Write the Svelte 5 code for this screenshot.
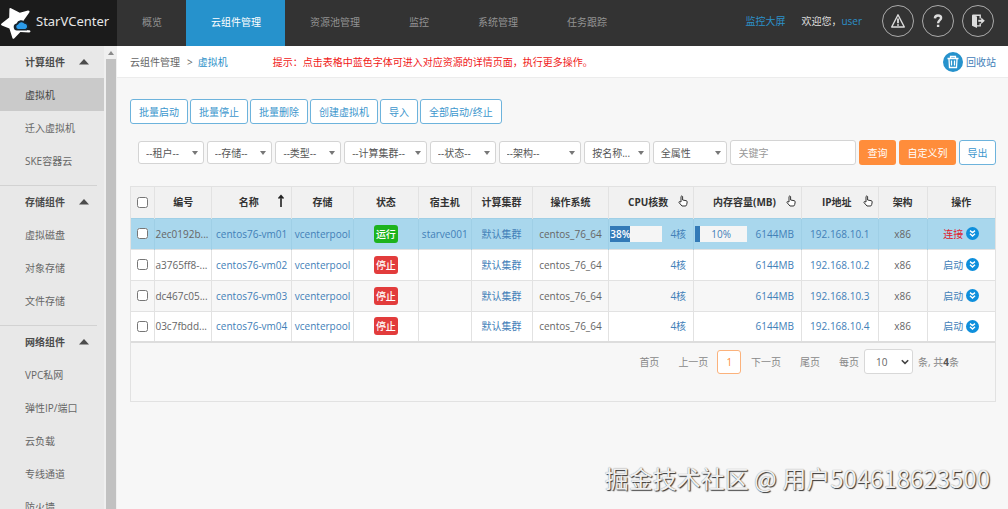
<script lang="ts">
  type Vm = {
    id: string;
    name: string;
    running: boolean;
    host: string;
    cpu: number | null;
    mem: number | null;
    ip: string;
  };

  const tabs = ["概览", "云组件管理", "资源池管理", "监控", "系统管理", "任务跟踪"];

  const groups = [
    { title: "计算组件", items: ["虚拟机", "迁入虚拟机", "SKE容器云"] },
    { title: "存储组件", items: ["虚拟磁盘", "对象存储", "文件存储"] },
    { title: "网络组件", items: ["VPC私网", "弹性IP/端口", "云负载", "专线通道", "防火墙"] },
  ];

  const actions = ["批量启动", "批量停止", "批量删除", "创建虚拟机", "导入", "全部启动/终止"];

  const filters = [
    { label: "租户", text: "--租户--" },
    { label: "存储", text: "--存储--" },
    { label: "类型", text: "--类型--" },
    { label: "计算集群", text: "--计算集群--" },
    { label: "状态", text: "--状态--" },
    { label: "架构", text: "--架构--" },
    { label: "查询方式", text: "按名称..." },
    { label: "属性", text: "全属性" },
  ];

  // width is relative, the columns share the table's width
  const columns = [
    { title: "编号", width: 57 },
    { title: "名称", width: 80, icon: "sort" },
    { title: "存储", width: 62 },
    { title: "状态", width: 65 },
    { title: "宿主机", width: 53 },
    { title: "计算集群", width: 61 },
    { title: "操作系统", width: 77 },
    { title: "CPU核数", width: 85, icon: "hand" },
    { title: "内存容量(MB)", width: 108, icon: "hand" },
    { title: "IP地址", width: 77, icon: "hand" },
    { title: "架构", width: 49 },
    { title: "操作", width: 68 },
  ];
  const checkWidth = 24;
  const totalWidth = checkWidth + columns.reduce((sum, c) => sum + c.width, 0);

  const vms: Vm[] = [
    { id: "2ec0192b...", name: "centos76-vm01", running: true, host: "starve001", cpu: 38, mem: 10, ip: "192.168.10.1" },
    { id: "a3765ff8-...", name: "centos76-vm02", running: false, host: "", cpu: null, mem: null, ip: "192.168.10.2" },
    { id: "dc467c05...", name: "centos76-vm03", running: false, host: "", cpu: null, mem: null, ip: "192.168.10.3" },
    { id: "03c7fbdd...", name: "centos76-vm04", running: false, host: "", cpu: null, mem: null, ip: "192.168.10.4" },
  ];

  let activeTab = $state("云组件管理");
  let activeItem = $state("虚拟机");
  let selected = $state<string[]>([]);
  let allSelected = $derived(selected.length === vms.length);

  function toggleAll() {
    selected = allSelected ? [] : vms.map((vm) => vm.id);
  }
</script>

{#snippet usage(percent: number | null, text: string)}
  <div class="usage">
    {#if percent !== null}
      <div class="bar">
        <div class="bar-fill" style="width: {percent}%"></div>
        <span class="bar-label {percent > 30 ? 'inside' : ''}">{percent}%</span>
      </div>
    {/if}
    <a class="usage-text" href="#usage">{text}</a>
  </div>
{/snippet}

<div class="app">
  <header class="header">
    <a class="brand" href="#home">
      <svg class="logo" viewBox="0 0 32 37" aria-hidden="true">
        <path d="M11 5.3Q9.4 4.5 9.4 6.4L9.2 14.4 1.6 20.6Q.2 21.8 1.8 22.6L9.4 25.6 12.4 35Q13.2 36.6 14.4 35.2L20.4 28.9 29.2 29.4Q30.8 29.3 30.4 28Q30 27 28.8 27.2L26 27 23.6 17.6 29.3 9.4Q30.2 7.4 28 7.5L19.8 9.8Z" fill="#fff" />
        <path d="M17 27.6a3.6 3.6 0 0 1-.5-7.1 5 5 0 0 1 8.7-1.2 4.2 4.2 0 0 1 3 6.7l-1.4 1.6z" fill="#16242e" />
        <path d="M18 26a2.3 2.3 0 0 1 .1-4.5 3.7 3.7 0 0 1 6.4-.7 2.7 2.7 0 0 1 .9 5.2z" fill="#2b9bea" />
      </svg>
      <span>StarVCenter</span>
    </a>
    <nav class="tabs">
      {#each tabs as tab}
        <button class="tab {activeTab === tab ? 'active' : ''}" onclick={() => (activeTab = tab)}>{tab}</button>
      {/each}
    </nav>
    <div class="user">
      <a href="#screen">监控大屏</a>
      <span class="welcome">欢迎您，<a href="#user">user</a></span>
      <div class="round-btns">
        <button class="round-btn" aria-label="告警">
          <svg width="16" height="16" viewBox="0 0 16 16" fill="none" stroke="currentColor" stroke-width="1.4" stroke-linejoin="round"><path d="M8 1.8 14.3 14H1.7z" /><path d="M8 5.6v4.6M8 11.2v1.6" stroke-width="1.8" /></svg>
        </button>
        <button class="round-btn" aria-label="帮助">
          <svg width="16" height="16" viewBox="0 0 16 16" fill="none" stroke="currentColor" stroke-width="2.4"><path d="M4.900 5.400C5 3.400 6.200 2.500 8 2.500c1.900 0 3.100 1 3.100 2.500C11.100 7.200 8.100 7.200 8.100 10.200M8.100 11.700v2.400" /></svg>
        </button>
        <button class="round-btn" aria-label="退出">
          <svg width="16" height="16" viewBox="0 0 16 16" fill="none" stroke="currentColor" stroke-width="1.4"><path d="M2 2l5 1.600v11.400L2 12.800z" fill="currentColor" stroke="none" /><path d="M2.500 2.300h7.700v3.200M10.200 10.200v2.700H6" /><path d="M8.300 7.800h4" stroke-width="2" /><path d="M11.200 4.600 14.800 7.800 11.200 11z" fill="currentColor" stroke="none" /></svg>
        </button>
      </div>
    </div>
  </header>

  <div class="body">
    <aside class="sidebar">
      {#each groups as group}
        <section class="group">
          <button class="group-title">
            {group.title}
            <svg width="10" height="6" viewBox="0 0 10 6" aria-hidden="true"><path d="M5 0l5 5.500H0z" fill="currentColor" /></svg>
          </button>
          {#each group.items as item}
            <button class="menu-item {activeItem === item ? 'active' : ''}" onclick={() => (activeItem = item)}>{item}</button>
          {/each}
        </section>
      {/each}
    </aside>
    <div class="scrollbar">
      <svg width="6" height="4" viewBox="0 0 6 4" aria-hidden="true"><path d="M3 0l3 4H0z" fill="#8a8a8a" /></svg>
      <div class="thumb"></div>
    </div>

    <main class="main">
      <div class="crumbs">
        <span>云组件管理</span>
        <span class="sep">&gt;</span>
        <a class="here" href="#vm">虚拟机</a>
        <p class="tip">提示：点击表格中蓝色字体可进入对应资源的详情页面，执行更多操作。</p>
        <a class="recycle" href="#recycle">
          <svg width="20" height="20" viewBox="0 0 20 20" fill="none" stroke="#fff" aria-hidden="true"><circle cx="10" cy="10" r="10" fill="#2692cc" stroke="none" /><path d="M4.500 6.500h11M7.500 6V4.500h5V6M6 7l.500 8.500h7L14 7M8.500 8.500v5M11.500 8.500v5" stroke-width="1.300" /></svg>
          回收站
        </a>
      </div>

      <div class="content">
        <div class="actions">
          {#each actions as action}
            <button class="btn outline">{action}</button>
          {/each}
        </div>

        <form class="filters" onsubmit={(e) => e.preventDefault()}>
          {#each filters as filter}
            <label class="select">
              <select aria-label={filter.label}>
                <option>{filter.text}</option>
              </select>
            </label>
          {/each}
          <input class="keyword" type="text" placeholder="关键字" aria-label="关键字" />
          <button class="btn orange" type="submit">查询</button>
          <button class="btn orange" type="button">自定义列</button>
          <button class="btn outline" type="button">导出</button>
        </form>

        <div class="panel">
          <table>
            <colgroup>
              <col style="width: {(checkWidth / totalWidth) * 100}%" />
              {#each columns as column}
                <col style="width: {(column.width / totalWidth) * 100}%" />
              {/each}
            </colgroup>
            <thead>
              <tr>
                <th><input type="checkbox" aria-label="全选" checked={allSelected} onchange={toggleAll} /></th>
                {#each columns as column}
                  <th class={column.icon ? "sortable" : ""}>
                    {column.title}
                    {#if column.icon === "sort"}
                      <svg class="th-icon" width="10" height="14" viewBox="0 0 10 14" fill="none" stroke="#222" stroke-width="1.600" aria-hidden="true"><path d="M5 13V2M2.500 4.500 5 1.800l2.500 2.700" /></svg>
                    {:else if column.icon === "hand"}
                      <svg class="th-icon" width="10" height="14" viewBox="0 0 10 14" fill="#fff" stroke="#333" stroke-linejoin="round" aria-hidden="true"><path d="M3 8V2.500q.800-1.200 1.600 0V6l3.600.700q1.100.300 1 1.300l-.500 2.500-.900 1.500H4L1 8.600q-.300-1 .700-1z" /></svg>
                    {/if}
                  </th>
                {/each}
              </tr>
            </thead>
            <tbody>
              {#each vms as vm}
                <tr class={vm.running ? "current" : ""}>
                  <td><input type="checkbox" aria-label={vm.name} value={vm.id} bind:group={selected} /></td>
                  <td class="id">{vm.id}</td>
                  <td><a href="#vm">{vm.name}</a></td>
                  <td><a href="#pool">vcenterpool</a></td>
                  <td><span class="status {vm.running ? 'on' : 'off'}">{vm.running ? "运行" : "停止"}</span></td>
                  <td>{#if vm.host}<a href="#host">{vm.host}</a>{/if}</td>
                  <td><a href="#cluster">默认集群</a></td>
                  <td>centos_76_64</td>
                  <td>{@render usage(vm.cpu, "4核")}</td>
                  <td>{@render usage(vm.mem, "6144MB")}</td>
                  <td><a href="#ip">{vm.ip}</a></td>
                  <td>x86</td>
                  <td>
                    <div class="ops">
                      <a class={vm.running ? "connect" : ""} href="#op">{vm.running ? "连接" : "启动"}</a>
                      <button class="more" aria-label="更多操作">
                        <svg width="13" height="13" viewBox="0 0 13 13" fill="none" stroke="#fff" stroke-width="1.400"><circle cx="6.500" cy="6.500" r="6.500" fill="#0e8fdc" stroke="none" /><path d="M4 3.600l2.500 2 2.500-2M4 6.700l2.500 2.300L9 6.700" /></svg>
                      </button>
                    </div>
                  </td>
                </tr>
              {/each}
            </tbody>
          </table>

          <div class="pager">
            <a href="#first">首页</a>
            <a href="#prev">上一页</a>
            <a class="page" href="#1">1</a>
            <a href="#next">下一页</a>
            <a href="#last">尾页</a>
            <label class="per-page">
              每页
              <span class="size">
                <select>
                  <option>10</option>
                  <option>20</option>
                </select>
                <svg width="8" height="6" viewBox="0 0 8 6" fill="none" stroke="#444" stroke-width="1.600" aria-hidden="true"><path d="M.800 1.200 4 4.400l3.200-3.200" /></svg>
              </span>
            </label>
            <span>条, 共<b>4</b>条</span>
          </div>
        </div>
      </div>
    </main>
  </div>

  <div class="watermark">掘金技术社区 @ 用户504618623500</div>
</div>

<style>
  :global(body) {
    background: #f7f7f7;
  }

  .app {
    display: flex;
    flex-direction: column;
    height: 100vh;
    overflow: hidden;
    position: relative;
    color: #666;
    font-family: "Open Sans", "Noto Sans CJK SC", sans-serif;
    font-size: 10px;
    line-height: 16px;
  }

  .app * {
    box-sizing: border-box;
  }

  a {
    color: #4280b8;
    text-decoration: none;
  }

  button,
  input,
  select {
    margin: 0;
    font: inherit;
    color: inherit;
  }

  button {
    padding: 0;
    border: none;
    background: none;
    cursor: pointer;
  }

  svg {
    display: block;
    flex: none;
  }

  /* header */
  .header {
    display: flex;
    flex: none;
    height: 46px;
    background: #333;
  }

  .brand {
    display: flex;
    align-items: center;
    gap: 4px;
    flex: none;
    width: 117px;
    padding-bottom: 4px;
    background: #1b1b1b;
    color: #e6e6e6;
    font-family: "Noto Sans", sans-serif;
    font-size: 13px;
  }

  .logo {
    width: 32px;
    height: 37px;
  }

  .tabs {
    display: flex;
  }

  .tab {
    padding: 0 24px 3px 25px;
    color: #929292;
  }

  .tab.active {
    background: #2692cc;
    color: #fff;
  }

  .user {
    display: flex;
    align-items: center;
    gap: 16px;
    margin-left: auto;
    padding: 0 14px 4px 0;
    color: #ddd;
  }

  .user a {
    color: #2c90c8;
  }

  .round-btns {
    display: flex;
    gap: 8px;
    margin-left: 4px;
  }

  .round-btn {
    display: flex;
    align-items: center;
    justify-content: center;
    width: 32px;
    height: 32px;
    border: 1px solid #aaa;
    border-radius: 50%;
    color: #ddd;
  }

  /* sidebar */
  .body {
    display: flex;
    flex: 1;
    min-height: 0;
  }

  .sidebar {
    flex: none;
    width: 104px;
    overflow: hidden;
    background: #e8e8e8;
  }

  .group + .group::before {
    content: "";
    display: block;
    margin: 8px 7px 0 0;
    border-top: 1px solid #d2d2d2;
  }

  .group-title,
  .menu-item {
    display: flex;
    align-items: center;
    width: 100%;
    height: 33px;
    padding-left: 25px;
    text-align: left;
    white-space: nowrap;
  }

  .group-title {
    gap: 14px;
    height: 32px;
    color: #4c4c4c;
    font-weight: 700;
  }

  .menu-item.active {
    background: #cacaca;
    color: #444;
  }

  .scrollbar {
    display: flex;
    flex-direction: column;
    align-items: center;
    gap: 4px;
    flex: none;
    width: 13px;
    padding-top: 5px;
    background: #efefef;
  }

  .thumb {
    flex: 1;
    width: 10px;
    background: #c1c1c1;
  }

  /* main */
  .main {
    flex: 1;
    min-width: 0;
  }

  .crumbs {
    display: flex;
    align-items: center;
    height: 32px;
    padding: 0 12px 0 13px;
    border-bottom: 1px solid #ececec;
    background: #fff;
  }

  .sep {
    padding: 0 5px 0 7px;
  }

  .here {
    color: #2c90c8;
  }

  .tip {
    margin: 0 0 0 45px;
    color: #f01818;
  }

  .recycle {
    display: flex;
    align-items: center;
    gap: 3px;
    margin-left: auto;
  }

  .content {
    padding: 21px 12px 0 13px;
  }

  .actions {
    display: flex;
    gap: 2px;
  }

  .btn {
    height: 25px;
    border: 1px solid transparent;
    border-radius: 3px;
    white-space: nowrap;
  }

  .btn.outline {
    border-color: #6db3dc;
    background: #fff;
    color: #3c96cd;
  }

  .actions .btn {
    padding: 0 8px;
  }

  .btn.orange {
    background: #ff8d3b;
    color: #fff;
  }

  .filters {
    display: grid;
    grid-template-columns: 66fr 66fr 66fr 83fr 66fr 83fr 66fr 74fr 127fr 37px 57px 37px;
    align-items: center;
    gap: 3px;
    padding: 16px 0 21px 8px;
  }

  .select {
    position: relative;
    min-width: 0;
  }

  .select select {
    appearance: none;
    display: block;
    width: 100%;
    height: 23px;
    padding: 0 7px;
    border: 1px solid #d4d4d4;
    border-radius: 3px;
    background: #fff;
    color: #555;
  }

  .select::after {
    content: "";
    position: absolute;
    top: 10px;
    right: 6px;
    border: 3px solid transparent;
    border-top: 4px solid #777;
    border-bottom: none;
    pointer-events: none;
  }

  .keyword {
    width: 100%;
    height: 25px;
    padding: 0 8px;
    border: 1px solid #d4d4d4;
    border-radius: 3px;
    background: #fff;
  }

  .keyword::placeholder {
    color: #999;
  }

  /* table */
  .panel {
    border: 1px solid #e2e2e2;
  }

  table {
    width: 100%;
    table-layout: fixed;
    border-collapse: collapse;
    border-bottom: 2px solid #ddd;
  }

  th,
  td {
    height: 31px;
    padding: 0;
    border-right: 1px solid #e2e2e2;
    overflow: hidden;
    text-align: center;
    white-space: nowrap;
  }

  th:last-child,
  td:last-child {
    border-right: none;
  }

  th {
    position: relative;
    background: #f1f1f1;
    color: #333;
    font-weight: 700;
  }

  th.sortable {
    padding-right: 6px;
  }

  .th-icon {
    position: absolute;
    top: 7px;
    right: 5px;
  }

  td {
    border-top: 1px solid #e2e2e2;
  }

  td.id {
    text-align: left;
  }

  tbody tr {
    background: #fff;
  }

  tbody tr:nth-child(odd) {
    background: #f7f7f7;
  }

  tbody tr.current {
    background: #a9d7ed;
  }

  .current td {
    border-color: #9fcfe6;
  }

  input[type="checkbox"] {
    display: block;
    width: 11px;
    height: 11px;
    margin: 0 auto;
  }

  .status {
    display: inline-block;
    padding: 1px 2px;
    border-radius: 3px;
    color: #fff;
    font-weight: 500;
  }

  .status.on {
    background: #1db31d;
  }

  .status.off {
    background: #e23c3c;
  }

  .usage {
    display: flex;
    align-items: center;
    padding: 0 7px 0 1px;
  }

  .usage-text {
    margin-left: auto;
  }

  .bar {
    position: relative;
    width: 52px;
    height: 16px;
    background: #f5f5f5;
  }

  .bar-fill {
    height: 100%;
    background: #337ab7;
  }

  .bar-label {
    position: absolute;
    inset: 0;
    color: #4280b8;
  }

  .bar-label.inside {
    color: #fff;
    font-weight: 600;
    text-align: left;
  }

  .ops {
    display: flex;
    align-items: center;
    justify-content: center;
    gap: 3px;
  }

  .connect {
    color: #e0202c;
  }

  .pager {
    display: flex;
    align-items: center;
    justify-content: flex-end;
    padding: 6px 36px 27px 0;
    color: #888;
  }

  .pager a {
    padding: 0 9px 0 10px;
    color: #888;
  }

  .pager .page {
    padding: 3px 8px;
    border: 1px solid #fbb27c;
    border-radius: 3px;
    background: #fff;
    color: #ff8d3b;
  }

  .per-page {
    display: flex;
    align-items: center;
    gap: 5px;
    padding: 0 5px 0 10px;
  }

  .size {
    display: grid;
    align-items: center;
  }

  .size select {
    appearance: none;
    grid-area: 1 / 1;
    width: 49px;
    height: 25px;
    padding: 0 11px;
    border: 1px solid #d8d8d8;
    border-radius: 3px;
    background: #fff;
    color: #666;
  }

  .size svg {
    grid-area: 1 / 1;
    justify-self: end;
    margin-right: 4px;
    pointer-events: none;
  }

  .pager b {
    color: #555;
  }

  .watermark {
    position: absolute;
    right: 18px;
    bottom: 13px;
    color: #f0f0f0;
    font-family: "Noto Sans CJK SC", sans-serif;
    font-size: 24px;
    line-height: 36px;
    text-shadow: 1px 1px 1px #333, 0 0 1px #888;
    pointer-events: none;
  }
</style>
